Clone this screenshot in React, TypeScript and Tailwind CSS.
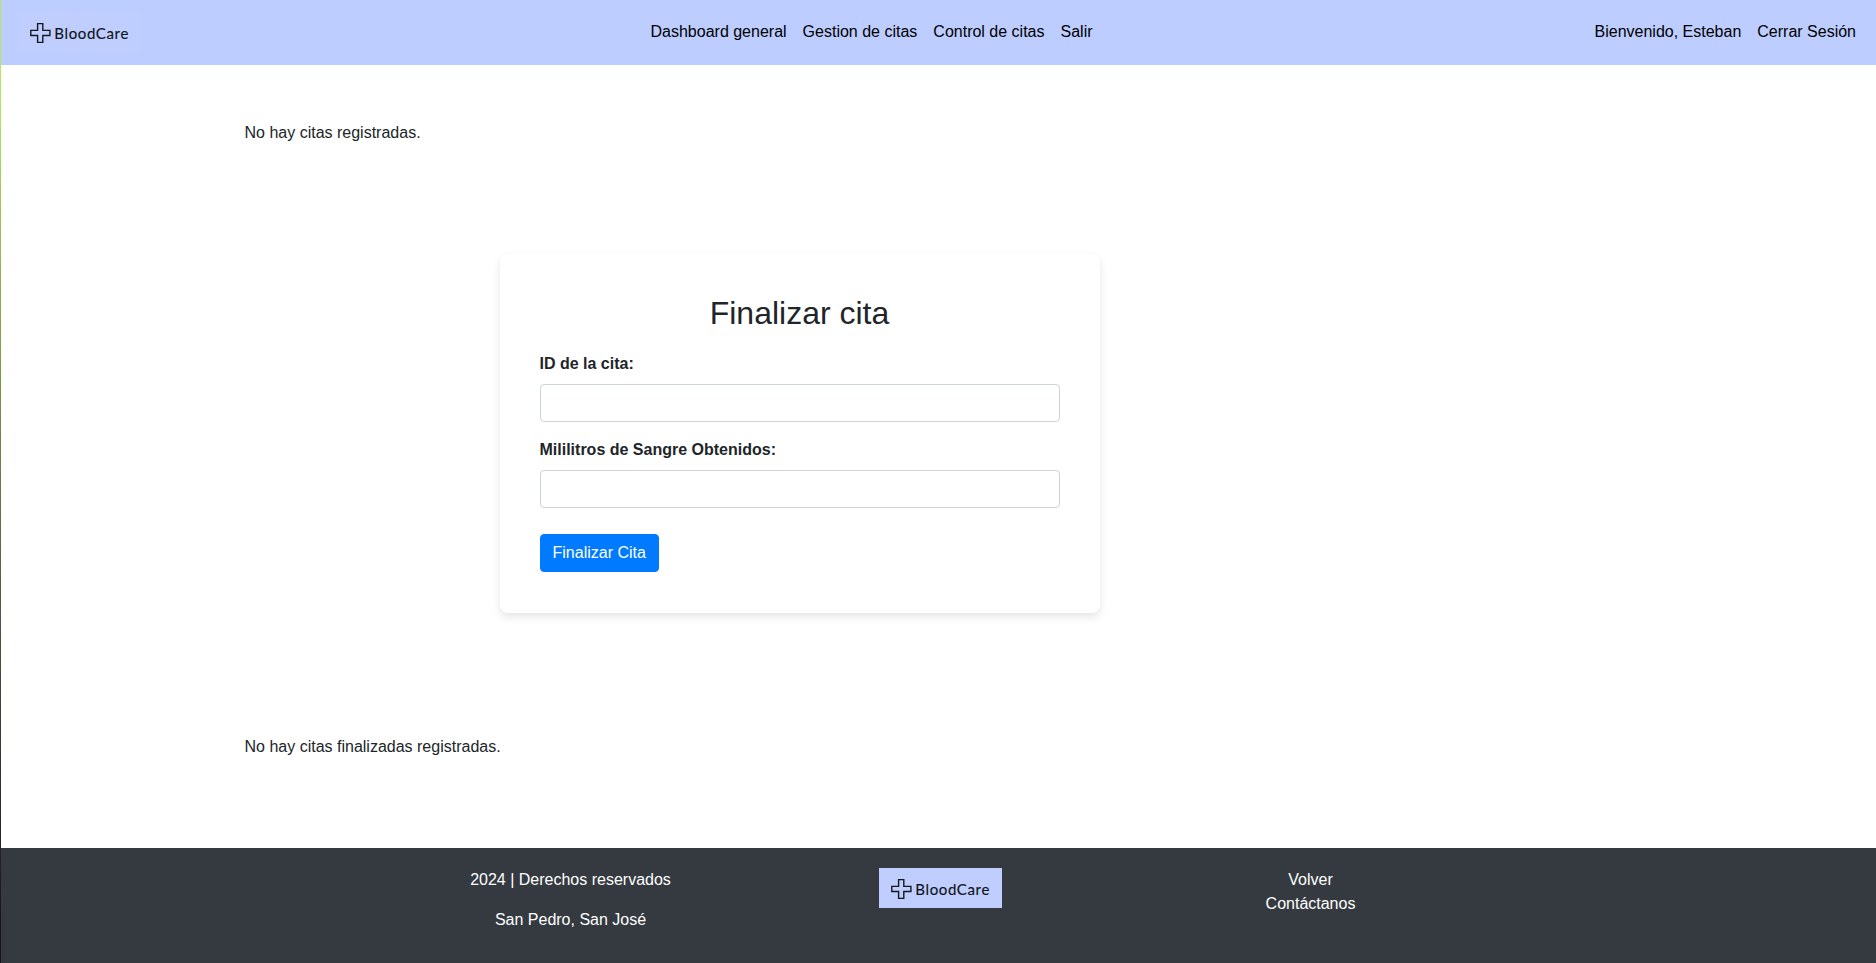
import React from "react";

function Logo() {
  return (
    <svg width="123" height="40" viewBox="0 0 123 40" role="img" aria-label="BloodCare" className="block bg-[#bfceff]">
      <path d="M19.6 11.6h5.2v6.8h7.1v5.1h-7.1v6.9h-5.2v-6.9h-6.8v-5.1h6.8z" fill="none" stroke="#15181f" strokeWidth="1.4" />
      <text x="36.3" y="26.5" fontSize="15" textLength="74" fill="#101319" stroke="#101319" strokeWidth="0.15" className="font-['Lato',sans-serif]">
        BloodCare
      </text>
    </svg>
  );
}

function Field({ id, label }: { id: string; label: string }) {
  return (
    <div className="mb-4">
      <label htmlFor={id} className="mb-2 block font-bold">
        {label}
      </label>
      <input id={id} type="text" className="block h-[38px] w-full rounded border border-[#ced4da] bg-white px-3" />
    </div>
  );
}

export default function App() {
  return (
    <div className="flex h-[963px] bg-white font-['Liberation_Sans',sans-serif] text-base leading-6 text-[#212529]">
      <div className="w-px shrink-0 bg-linear-to-b from-[#b4e85a] from-10% to-[#1a1420] to-95%" />
      <div className="flex min-w-0 flex-1 flex-col">
        <header className="grid h-[65px] shrink-0 grid-cols-[632.5px_1fr_auto] items-center bg-[#bdcdff] pr-5 pl-[17px] text-black">
          <div className="pb-px">
            <Logo />
          </div>
          <nav className="flex gap-4 pb-px">
            <a href="#">Dashboard general</a>
            <a href="#">Gestion de citas</a>
            <a href="#">Control de citas</a>
            <a href="#">Salir</a>
          </nav>
          <div className="flex gap-4 pb-px">
            <span>Bienvenido, Esteban</span>
            <a href="#">Cerrar Sesión</a>
          </div>
        </header>

        <main className="flex flex-1 flex-col pl-[243.5px]">
          <p className="mt-14">No hay citas registradas.</p>
          <form className="mt-[109px] ml-[255px] h-[359px] w-[600px] rounded-lg bg-white p-10 shadow-[0_4px_8px_rgba(0,0,0,0.1)]">
            <h2 className="mb-5 text-center text-[32px] leading-[38px]">Finalizar cita</h2>
            <Field id="cita" label="ID de la cita:" />
            <Field id="mililitros" label="Mililitros de Sangre Obtenidos:" />
            <button type="button" className="mt-[10px] h-[38px] rounded border border-[#007bff] bg-[#007bff] px-3 text-white">
              Finalizar Cita
            </button>
          </form>
          <p className="mt-[122px]">No hay citas finalizadas registradas.</p>
        </main>

        <footer className="grid h-[115px] shrink-0 grid-cols-[259px_123px_261px] justify-start gap-x-[178.5px] bg-[#343a40] pt-5 pl-[440px] text-center text-white">
          <div>
            <p className="mb-4">2024 | Derechos reservados</p>
            <p>San Pedro, San José</p>
          </div>
          <Logo />
          <div className="flex flex-col">
            <a href="#">Volver</a>
            <a href="#">Contáctanos</a>
          </div>
        </footer>
      </div>
    </div>
  );
}
